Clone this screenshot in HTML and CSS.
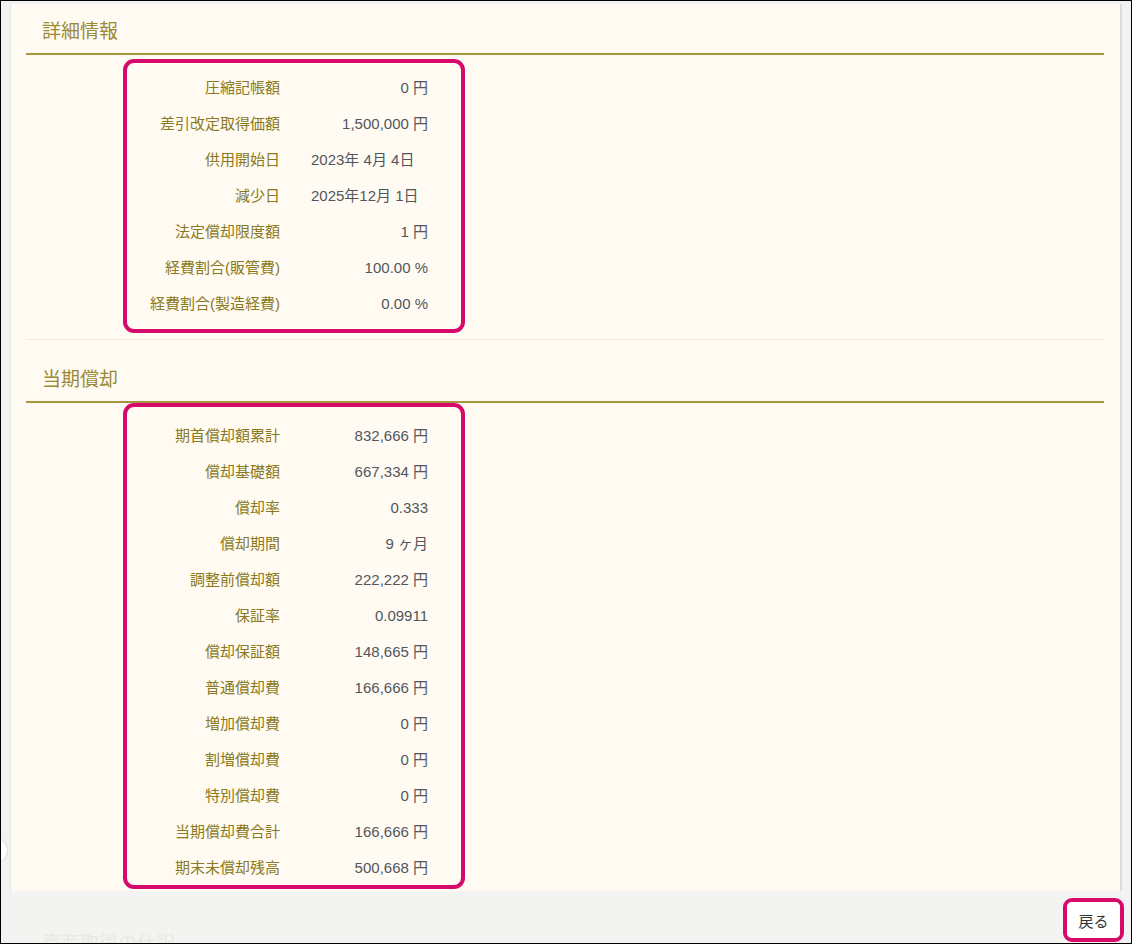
FILE: index.html
```html
<!DOCTYPE html>
<html lang="ja">
<head>
<meta charset="utf-8">
<title>詳細情報</title>
<link rel="stylesheet" href="styles.css">
</head>
<body>
<div class="frame">
  <div class="panel">
    <section class="section section-first">
      <h2 class="head">詳細情報</h2>
      <div class="rows">
        <div class="row"><span class="label">圧縮記帳額</span><span class="value">0 円</span></div>
        <div class="row"><span class="label">差引改定取得価額</span><span class="value">1,500,000 円</span></div>
        <div class="row"><span class="label">供用開始日</span><span class="value left">2023年 4月 4日</span></div>
        <div class="row"><span class="label">減少日</span><span class="value left">2025年12月 1日</span></div>
        <div class="row"><span class="label">法定償却限度額</span><span class="value">1 円</span></div>
        <div class="row"><span class="label">経費割合(販管費)</span><span class="value">100.00 %</span></div>
        <div class="row"><span class="label">経費割合(製造経費)</span><span class="value">0.00 %</span></div>
        <div class="mark mark-1"></div>
      </div>
    </section>
    <section class="section">
      <h2 class="head">当期償却</h2>
      <div class="rows">
        <div class="row"><span class="label">期首償却額累計</span><span class="value">832,666 円</span></div>
        <div class="row"><span class="label">償却基礎額</span><span class="value">667,334 円</span></div>
        <div class="row"><span class="label">償却率</span><span class="value">0.333</span></div>
        <div class="row"><span class="label">償却期間</span><span class="value">9 ヶ月</span></div>
        <div class="row"><span class="label">調整前償却額</span><span class="value">222,222 円</span></div>
        <div class="row"><span class="label">保証率</span><span class="value">0.09911</span></div>
        <div class="row"><span class="label">償却保証額</span><span class="value">148,665 円</span></div>
        <div class="row"><span class="label">普通償却費</span><span class="value">166,666 円</span></div>
        <div class="row"><span class="label">増加償却費</span><span class="value">0 円</span></div>
        <div class="row"><span class="label">割増償却費</span><span class="value">0 円</span></div>
        <div class="row"><span class="label">特別償却費</span><span class="value">0 円</span></div>
        <div class="row"><span class="label">当期償却費合計</span><span class="value">166,666 円</span></div>
        <div class="row"><span class="label">期末未償却残高</span><span class="value">500,668 円</span></div>
        <div class="mark mark-2"></div>
      </div>
    </section>
    <section class="section">
      <h2 class="head">資産取得の仕訳</h2>
      <div class="rows"></div>
    </section>
  </div>
  <div class="handle"></div>
  <div class="footer">
    <span class="btn-mark"><button class="btn" type="button">戻る</button></span>
  </div>
</div>
</body>
</html>
```

FILE: styles.css
```css
html, body {
  margin: 0;
  padding: 0;
}
body {
  font-family: "Liberation Sans", "Noto Sans CJK JP", sans-serif;
  background: #f2f2f2;
}
.frame {
  position: relative;
  width: 1132px;
  height: 944px;
  box-sizing: border-box;
  border: 1px solid #000;
  background: #f2f2f2;
  overflow: hidden;
}
.panel {
  margin: 3px 9px 0 9px;
  background: #fffbf3;
  border-left: 1px solid #e6e6e6;
  border-right: 2px solid #dcdcdc;
  padding: 0 16px 200px 15px;
}
.section {
  margin: 0;
}
.head {
  margin: 0;
  padding: 28px 0 9px 16px;
  font-size: 19px;
  line-height: 24px;
  font-weight: normal;
  color: #9a8935;
  border-bottom: 2px solid #a69641;
}
.section-first .head {
  padding-top: 16px;
}
.rows {
  position: relative;
  padding: 15px 0 17px 0;
  border-bottom: 1px solid #f1ece2;
}
.row {
  display: grid;
  grid-template-columns: 254px 117px;
  column-gap: 31px;
  height: 36px;
  align-items: center;
  font-size: 15px;
  line-height: 20px;
}
.label {
  text-align: right;
  color: #8a7920;
}
.value {
  text-align: right;
  color: #52565b;
}
.value.left {
  text-align: left;
}
.mark {
  position: absolute;
  left: 97px;
  width: 342px;
  box-sizing: border-box;
  border: 4.5px solid #d60a6b;
  border-radius: 11px;
  pointer-events: none;
}
.mark-1 {
  top: 4px;
  height: 274px;
}
.mark-2 {
  top: 0;
  height: 486px;
}
.handle {
  position: absolute;
  left: -19px;
  top: 837px;
  width: 25px;
  height: 25px;
  border-radius: 50%;
  background: #fff;
  box-shadow: 0 0 2px rgba(0, 0, 0, 0.25);
}
.footer {
  position: absolute;
  left: 0;
  right: 0;
  top: 890px;
  bottom: 0;
  background: rgba(242, 242, 242, 0.9);
  display: flex;
  justify-content: flex-end;
  align-items: flex-start;
  padding: 7px 7px 0 0;
}
.btn-mark {
  display: block;
  border: 4px solid #d60a6b;
  border-radius: 9px;
  background: #fff;
}
.btn {
  display: block;
  width: 53px;
  height: 36px;
  margin: 0;
  padding: 0;
  border: none;
  border-radius: 5px;
  background: #fff;
  font-family: "Liberation Sans", "Noto Sans CJK JP", sans-serif;
  font-size: 15px;
  color: #333;
}
```
